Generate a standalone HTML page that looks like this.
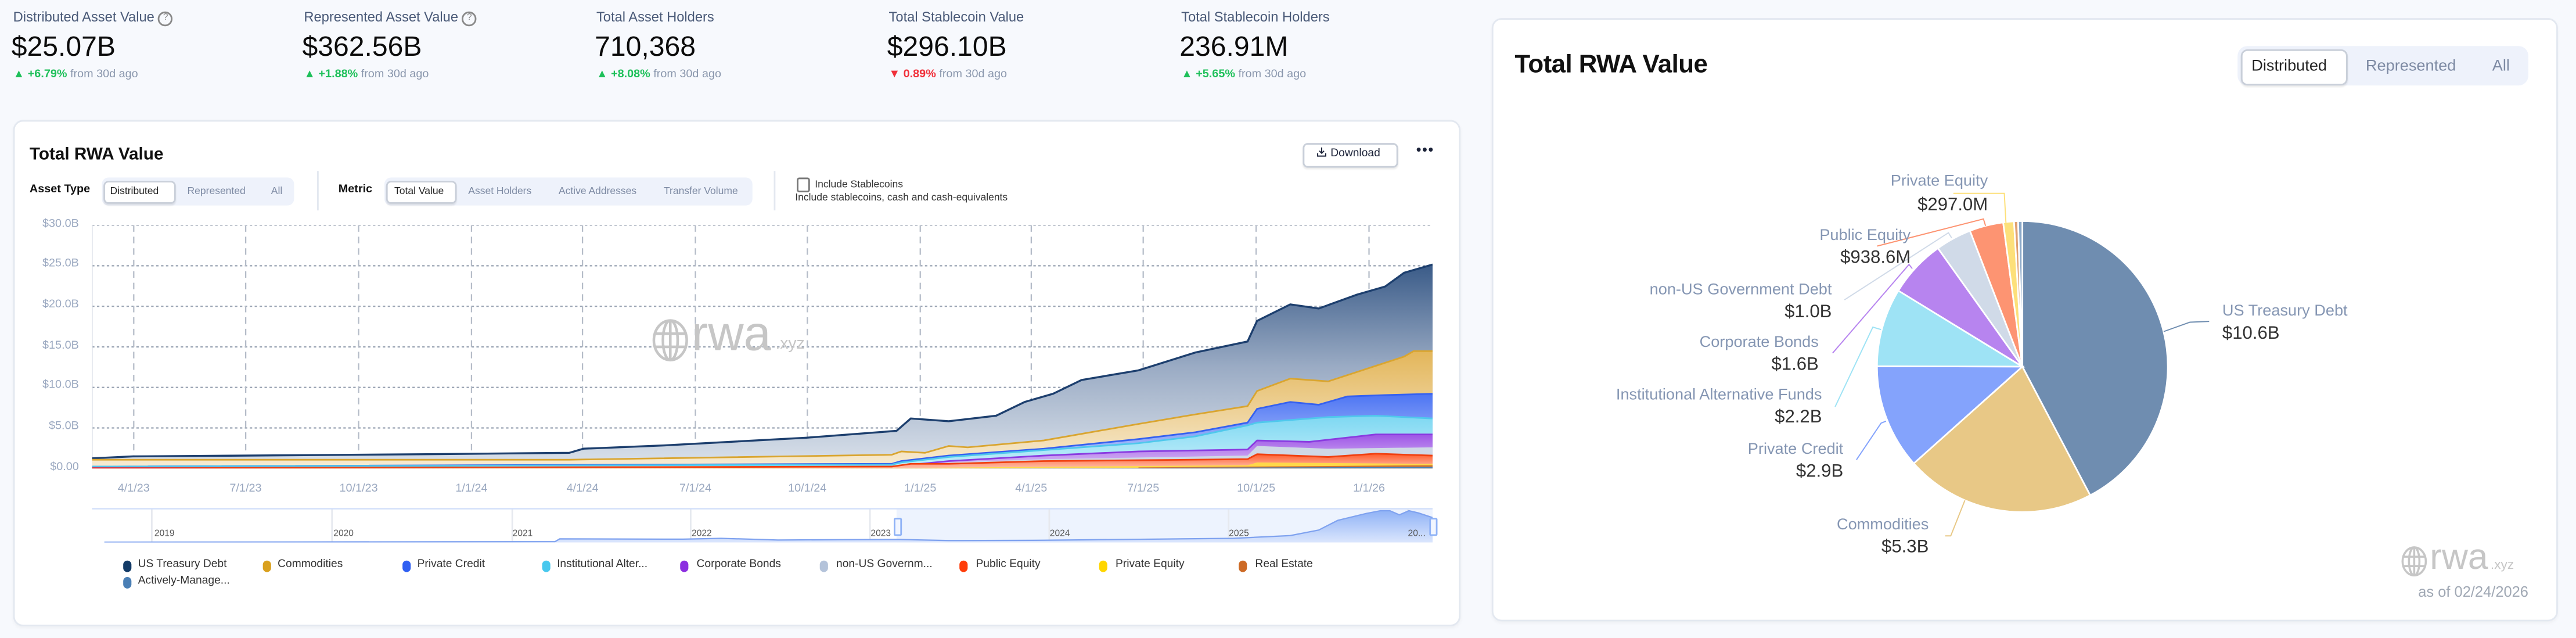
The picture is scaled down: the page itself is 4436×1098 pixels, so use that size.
<!DOCTYPE html>
<html><head><meta charset="utf-8">
<style>
html,body{margin:0;padding:0;background:#f7f9fd;}
body{width:4436px;height:1098px;overflow:hidden;font-family:"Liberation Sans",Arial,sans-serif;}
#root{position:absolute;left:0;top:0;width:1568px;height:388px;transform:scale(2.8291);transform-origin:0 0;}
.a{position:absolute;white-space:nowrap;}
.lbl{font-size:8.4px;color:#4a5a78;}
.val{font-size:17px;color:#0b0b0b;}
.chg{font-size:7px;color:#8a97ad;}
.up{color:#1ec05a;font-weight:bold;}
.dn{color:#f0303a;font-weight:bold;}
.card{position:absolute;background:#fff;border:1px solid #e3e8f0;border-radius:6px;box-shadow:0 1px 2px rgba(0,0,0,0.04);}
.seg{position:absolute;background:#eef2fb;border-radius:4px;}
.btn{position:absolute;background:#fff;border:1px solid #c9cfd9;border-radius:3px;box-shadow:0 1px 1px rgba(0,0,0,0.08);}
.s7{font-size:6.2px;color:#7d8aa3;}
.yl{font-size:7px;color:#9aa8c0;text-align:right;width:40px;}
.xl{font-size:7px;color:#9aa8c0;transform:translateX(-50%);}
.lg{font-size:6.8px;color:#333;}
.dot{position:absolute;width:5px;height:7px;border-radius:3px;}
.pl{font-size:9.6px;color:#8596b3;text-align:right;}
.pv{font-size:11px;color:#333;text-align:right;}
</style></head><body><div id="root">

<!-- stats -->
<div class="a lbl" style="left:8px;top:5px">Distributed Asset Value <span style="display:inline-block;width:7px;height:7px;border:0.8px solid #888;border-radius:50%;font-size:5.5px;line-height:7px;text-align:center;color:#888;vertical-align:1px">?</span></div>
<div class="a val" style="left:7px;top:19px">$25.07B</div>
<div class="a chg" style="left:8px;top:42px"><span class="up">▲ +6.79%</span> from 30d ago</div>

<div class="a lbl" style="left:185px;top:5px">Represented Asset Value <span style="display:inline-block;width:7px;height:7px;border:0.8px solid #888;border-radius:50%;font-size:5.5px;line-height:7px;text-align:center;color:#888;vertical-align:1px">?</span></div>
<div class="a val" style="left:184px;top:19px">$362.56B</div>
<div class="a chg" style="left:185px;top:42px"><span class="up">▲ +1.88%</span> from 30d ago</div>

<div class="a lbl" style="left:363px;top:5px">Total Asset Holders</div>
<div class="a val" style="left:362px;top:19px">710,368</div>
<div class="a chg" style="left:363px;top:42px"><span class="up">▲ +8.08%</span> from 30d ago</div>

<div class="a lbl" style="left:541px;top:5px">Total Stablecoin Value</div>
<div class="a val" style="left:540px;top:19px">$296.10B</div>
<div class="a chg" style="left:541px;top:42px"><span class="dn">▼ 0.89%</span> from 30d ago</div>

<div class="a lbl" style="left:719px;top:5px">Total Stablecoin Holders</div>
<div class="a val" style="left:718px;top:19px">236.91M</div>
<div class="a chg" style="left:719px;top:42px"><span class="up">▲ +5.65%</span> from 30d ago</div>

<!-- left card -->
<div class="card" style="left:8px;top:73px;width:879px;height:306px"></div>
<div class="a" style="left:18px;top:88px;font-size:10.5px;font-weight:bold;color:#111">Total RWA Value</div>
<div class="btn" style="left:793px;top:87px;width:56px;height:13px"></div>
<div class="a" style="left:801px;top:88.5px;font-size:6.8px;color:#1b2238">
<svg width="7" height="7" viewBox="0 0 10 10" style="vertical-align:-1px"><path d="M5 1v5M3 4l2 2 2-2M1.5 6v2.5h7V6" fill="none" stroke="#1b2238" stroke-width="1"/></svg> Download</div>
<div class="a" style="left:862px;top:86px;font-size:9px;color:#1b2238;letter-spacing:0.5px">•••</div>

<div class="a" style="left:18px;top:112px;font-size:7px;font-weight:bold;color:#111">Asset Type</div>
<div class="seg" style="left:61.7px;top:108px;width:117px;height:16.5px"></div>
<div class="btn" style="left:62.5px;top:109.5px;width:42px;height:12.5px"></div>
<div class="a s7" style="left:67px;top:112.5px;color:#222">Distributed</div>
<div class="a s7" style="left:114px;top:112.5px">Represented</div>
<div class="a s7" style="left:165px;top:112.5px">All</div>
<div class="a" style="left:192.5px;top:104px;width:0.8px;height:24px;background:#e3e8f0"></div>
<div class="a" style="left:206px;top:112px;font-size:7px;font-weight:bold;color:#111">Metric</div>
<div class="seg" style="left:233.7px;top:108px;width:224px;height:16.5px"></div>
<div class="btn" style="left:235px;top:109.5px;width:41px;height:12.5px"></div>
<div class="a s7" style="left:240px;top:112.5px;color:#222">Total Value</div>
<div class="a s7" style="left:285px;top:112.5px">Asset Holders</div>
<div class="a s7" style="left:340px;top:112.5px">Active Addresses</div>
<div class="a s7" style="left:404px;top:112.5px">Transfer Volume</div>
<div class="a" style="left:470.8px;top:104px;width:0.8px;height:24px;background:#e3e8f0"></div>
<div class="a" style="left:484.5px;top:108px;width:6px;height:6.5px;border:0.8px solid #777;border-radius:1.5px"></div>
<div class="a s7" style="left:496px;top:108.5px;color:#333">Include Stablecoins</div>
<div class="a s7" style="left:484px;top:116.5px;color:#333">Include stablecoins, cash and cash-equivalents</div>

<!-- y labels -->
<div class="a yl" style="left:8px;top:132.5px">$30.0B</div>
<div class="a yl" style="left:8px;top:157px">$25.0B</div>
<div class="a yl" style="left:8px;top:182px">$20.0B</div>
<div class="a yl" style="left:8px;top:206.5px">$15.0B</div>
<div class="a yl" style="left:8px;top:231px">$10.0B</div>
<div class="a yl" style="left:8px;top:256px">$5.0B</div>
<div class="a yl" style="left:8px;top:280.5px">$0.00</div>

<svg class="a" style="left:56px;top:137px" width="816" height="148" viewBox="97 77 1413 885" preserveAspectRatio="none">
<defs>
<linearGradient id="g1" gradientUnits="userSpaceOnUse" x1="0" y1="220" x2="0" y2="962"><stop offset="0" stop-color="#3a5b88"/><stop offset="0.5" stop-color="#9aabc4"/><stop offset="1" stop-color="#dce3ec"/></linearGradient>
<linearGradient id="g2" gradientUnits="userSpaceOnUse" x1="0" y1="535" x2="0" y2="962"><stop offset="0" stop-color="#e3b65a"/><stop offset="1" stop-color="#f8ecd4"/></linearGradient>
<linearGradient id="g3" gradientUnits="userSpaceOnUse" x1="0" y1="690" x2="0" y2="962"><stop offset="0" stop-color="#4c74f3"/><stop offset="1" stop-color="#c5d3fc"/></linearGradient>
<linearGradient id="g4" gradientUnits="userSpaceOnUse" x1="0" y1="775" x2="0" y2="962"><stop offset="0" stop-color="#7fd8f2"/><stop offset="1" stop-color="#c5effa"/></linearGradient>
<linearGradient id="g5" gradientUnits="userSpaceOnUse" x1="0" y1="838" x2="0" y2="962"><stop offset="0" stop-color="#9d55e6"/><stop offset="1" stop-color="#dcc2f6"/></linearGradient>
<linearGradient id="g6" gradientUnits="userSpaceOnUse" x1="0" y1="908" x2="0" y2="962"><stop offset="0" stop-color="#ff5a2a"/><stop offset="1" stop-color="#ffc0ac"/></linearGradient>
</defs>
<g stroke="#9aa4b3" stroke-width="0.8" vector-effect="non-scaling-stroke" fill="none">
<path d="M97 77H1510M97 224.5H1510M97 372H1510M97 519.5H1510M97 667H1510M97 814.5H1510M97 962H1510" stroke-dasharray="1.5 1.5" vector-effect="non-scaling-stroke"/>
<path d="M141 77V962M259 77V962M378 77V962M497 77V962M614 77V962M733 77V962M851 77V962M970 77V962M1087 77V962M1205 77V962M1324 77V962M1443 77V962" stroke="#b5bcc8" stroke-dasharray="4 3" vector-effect="non-scaling-stroke"/>
<path d="M97 77V962" stroke="#d6dbe3" vector-effect="non-scaling-stroke"/>
</g>
<polygon fill="url(#g1)" points="97,925 140,918 300,914 450,910 600,905 615,890 700,878 850,850 945,825 960,780 1000,790 1050,770 1080,720 1110,690 1140,640 1200,605 1260,540 1315,500 1325,425 1360,365 1390,380 1430,330 1460,300 1480,250 1510,220 1510,962 97,962"/>
<polyline fill="none" stroke="#1d3f6e" stroke-width="1.2" vector-effect="non-scaling-stroke" points="97,925 140,918 300,914 450,910 600,905 615,890 700,878 850,850 945,825 960,780 1000,790 1050,770 1080,720 1110,690 1140,640 1200,605 1260,540 1315,500 1325,425 1360,365 1390,380 1430,330 1460,300 1480,250 1510,220"/>
<polygon fill="url(#g2)" points="97,930 600,930 940,912 950,900 975,905 1000,880 1020,885 1100,860 1200,800 1260,765 1315,735 1325,680 1360,635 1400,645 1440,600 1480,555 1490,535 1510,535 1510,962 97,962"/>
<polyline fill="none" stroke="#d9a530" stroke-width="1" vector-effect="non-scaling-stroke" points="97,930 600,930 940,912 950,900 975,905 1000,880 1020,885 1100,860 1200,800 1260,765 1315,735 1325,680 1360,635 1400,645 1440,600 1480,555 1490,535 1510,535"/>
<polygon fill="url(#g3)" points="97,955 940,945 950,935 1000,915 1100,890 1200,855 1260,830 1315,795 1325,745 1360,720 1390,730 1420,700 1460,695 1510,690 1510,962 97,962"/>
<polyline fill="none" stroke="#3561f0" stroke-width="1" vector-effect="non-scaling-stroke" points="97,955 940,945 950,935 1000,915 1100,890 1200,855 1260,830 1315,795 1325,745 1360,720 1390,730 1420,700 1460,695 1510,690"/>
<polygon fill="url(#g4)" points="97,955 940,948 950,940 1000,920 1100,895 1200,870 1260,845 1315,805 1325,795 1400,775 1450,770 1510,780 1510,962 97,962"/>
<polyline fill="none" stroke="#4fc8ec" stroke-width="1" vector-effect="non-scaling-stroke" points="97,955 940,948 950,940 1000,920 1100,895 1200,870 1260,845 1315,805 1325,795 1400,775 1450,770 1510,780"/>
<polygon fill="url(#g5)" points="97,960 700,958 940,955 1000,935 1100,915 1200,900 1315,893 1325,860 1380,865 1450,838 1510,838 1510,962 97,962"/>
<polyline fill="none" stroke="#8a3be0" stroke-width="1" vector-effect="non-scaling-stroke" points="97,960 700,958 940,955 1000,935 1100,915 1200,900 1315,893 1325,860 1380,865 1450,838 1510,838"/>
<polygon fill="#cfd8e6" points="97,960 940,956 1000,940 1100,928 1200,922 1315,915 1325,880 1400,890 1510,885 1510,962 97,962"/>
<polygon fill="url(#g6)" points="97,961 940,955 960,945 1000,945 1100,935 1200,932 1315,928 1325,910 1400,920 1450,908 1510,915 1510,962 97,962"/>
<polyline fill="none" stroke="#f04010" stroke-width="1" vector-effect="non-scaling-stroke" points="97,961 940,955 960,945 1000,945 1100,935 1200,932 1315,928 1325,910 1400,920 1450,908 1510,915"/>
<polygon fill="#ffd84a" points="97,962 940,960 1315,950 1325,940 1510,945 1510,962"/>
<polygon fill="#d2742e" points="1200,962 1200,958 1510,950 1510,962"/>
<polygon fill="#4a7fb5" points="1000,962 1510,956 1510,962"/>
</svg>
<!-- watermark -->
<div class="a" style="left:396px;top:193px;color:#c6c6c6">
<svg width="24" height="26" viewBox="0 0 24 26" style="position:absolute;left:0;top:1px"><g fill="none" stroke="#c6c6c6" stroke-width="1.6"><ellipse cx="12" cy="13" rx="10" ry="12"/><ellipse cx="12" cy="13" rx="4.5" ry="12"/><path d="M2 9H22M2 17H22M12 1V25"/></g></svg>
<span style="position:absolute;left:25px;top:-6px;font-size:30px;">rwa</span><span style="position:absolute;left:76px;top:11px;font-size:10px">.xyz</span></div>

<!-- x labels -->
<div class="a xl" style="left:81.4px;top:294px">4/1/23</div>
<div class="a xl" style="left:149.5px;top:294px">7/1/23</div>
<div class="a xl" style="left:218.3px;top:294px">10/1/23</div>
<div class="a xl" style="left:287px;top:294px">1/1/24</div>
<div class="a xl" style="left:354.6px;top:294px">4/1/24</div>
<div class="a xl" style="left:423.3px;top:294px">7/1/24</div>
<div class="a xl" style="left:491.4px;top:294px">10/1/24</div>
<div class="a xl" style="left:560.2px;top:294px">1/1/25</div>
<div class="a xl" style="left:627.7px;top:294px">4/1/25</div>
<div class="a xl" style="left:695.9px;top:294px">7/1/25</div>
<div class="a xl" style="left:764.6px;top:294px">10/1/25</div>
<div class="a xl" style="left:833.3px;top:294px">1/1/26</div>

<!-- navigator -->
<svg class="a" style="left:56px;top:309px" width="816" height="21" viewBox="97 1100 1413 125" preserveAspectRatio="none">
<defs><linearGradient id="gn" x1="0" y1="0" x2="0" y2="1"><stop offset="0" stop-color="#8fb2f6"/><stop offset="1" stop-color="#dbe6fd"/></linearGradient></defs>
<rect x="945" y="1100" width="565" height="125" fill="#edf3fe"/>
<path d="M160 1100V1225M350 1100V1225M540 1100V1225M728 1100V1225M917 1100V1225M1106 1100V1225M1295 1100V1225M1484 1100V1225" stroke="#e6e9ef" stroke-width="1" vector-effect="non-scaling-stroke"/>
<path d="M110 1224L585 1222L590 1212L720 1213L760 1210L820 1216L945 1214L1000 1218L1100 1217L1300 1210L1360 1200L1390 1180L1410 1145L1440 1120L1455 1110L1465 1110L1475 1125L1485 1110L1495 1118L1510 1135L1510 1225L110 1225Z" fill="url(#gn)"/>
<path d="M110 1224L585 1222L590 1212L720 1213L760 1210L820 1216L945 1214L1000 1218L1100 1217L1300 1210L1360 1200L1390 1180L1410 1145L1440 1120L1455 1110L1465 1110L1475 1125L1485 1110L1495 1118L1510 1135" fill="none" stroke="#7fa2ef" stroke-width="0.8" vector-effect="non-scaling-stroke"/>
<path d="M97 1101H1510" stroke="#d3e0fa" stroke-width="1.5" vector-effect="non-scaling-stroke"/>
</svg>
<div class="a" style="left:543.5px;top:315px;width:3px;height:9px;background:#f2f6ff;border:0.7px solid #8fb2f6;border-radius:1px"></div>
<div class="a" style="left:869.5px;top:315px;width:3px;height:9px;background:#f2f6ff;border:0.7px solid #8fb2f6;border-radius:1px"></div>
<div class="a" style="font-size:5.5px;color:#555;left:94px;top:321.5px">2019</div>
<div class="a" style="font-size:5.5px;color:#555;left:203px;top:321.5px">2020</div>
<div class="a" style="font-size:5.5px;color:#555;left:312px;top:321.5px">2021</div>
<div class="a" style="font-size:5.5px;color:#555;left:421px;top:321.5px">2022</div>
<div class="a" style="font-size:5.5px;color:#555;left:530px;top:321.5px">2023</div>
<div class="a" style="font-size:5.5px;color:#555;left:639px;top:321.5px">2024</div>
<div class="a" style="font-size:5.5px;color:#555;left:748px;top:321.5px">2025</div>
<div class="a" style="font-size:5.5px;color:#555;left:857px;top:321.5px">20...</div>

<!-- legend -->
<div class="dot" style="left:74.5px;top:341px;background:#123a66"></div><div class="a lg" style="left:84px;top:340px">US Treasury Debt</div>
<div class="dot" style="left:159.5px;top:341px;background:#d9a01e"></div><div class="a lg" style="left:169px;top:340px">Commodities</div>
<div class="dot" style="left:244.5px;top:341px;background:#2f5ff2"></div><div class="a lg" style="left:254px;top:340px">Private Credit</div>
<div class="dot" style="left:329.5px;top:341px;background:#48c8ee"></div><div class="a lg" style="left:339px;top:340px">Institutional Alter...</div>
<div class="dot" style="left:414px;top:341px;background:#8c2fe0"></div><div class="a lg" style="left:424px;top:340px">Corporate Bonds</div>
<div class="dot" style="left:499px;top:341px;background:#b4c3da"></div><div class="a lg" style="left:509px;top:340px">non-US Governm...</div>
<div class="dot" style="left:584px;top:341px;background:#ff3d0a"></div><div class="a lg" style="left:594px;top:340px">Public Equity</div>
<div class="dot" style="left:669px;top:341px;background:#ffd600"></div><div class="a lg" style="left:679px;top:340px">Private Equity</div>
<div class="dot" style="left:754px;top:341px;background:#cd6a25"></div><div class="a lg" style="left:764px;top:340px">Real Estate</div>
<div class="dot" style="left:74.5px;top:351px;background:#4a7fb5"></div><div class="a lg" style="left:84px;top:350px">Actively-Manage...</div>

<!-- right card -->
<div class="card" style="left:908px;top:11px;width:647px;height:365px"></div>
<div class="a" style="left:922px;top:31px;font-size:15.5px;font-weight:bold;color:#111;letter-spacing:-0.2px">Total RWA Value</div>
<div class="seg" style="left:1361.6px;top:27.7px;width:177.5px;height:24.8px;border-radius:6px"></div>
<div class="btn" style="left:1364px;top:30px;width:63px;height:19.5px;border-radius:4px"></div>
<div class="a" style="left:1370.5px;top:34.5px;font-size:9.6px;color:#222">Distributed</div>
<div class="a" style="left:1440px;top:34.5px;font-size:9.6px;color:#7d8aa3">Represented</div>
<div class="a" style="left:1517px;top:34.5px;font-size:9.6px;color:#7d8aa3">All</div>

<svg class="a" style="left:908px;top:11px" width="647" height="365" viewBox="908 11 647 365">
<g stroke="#fff" stroke-width="1">
<path d="M1231 223L1231 134.5A88.5 88.5 0 0 1 1272.3 301.3Z" fill="#6f8db0"/>
<path d="M1231 223L1272.3 301.3A88.5 88.5 0 0 1 1164.9 281.9Z" fill="#e8c886"/>
<path d="M1231 223L1164.9 281.9A88.5 88.5 0 0 1 1142.5 222.8Z" fill="#84a3fc"/>
<path d="M1231 223L1142.5 222.8A88.5 88.5 0 0 1 1155.5 176.8Z" fill="#9ee3f5"/>
<path d="M1231 223L1155.5 176.8A88.5 88.5 0 0 1 1179.6 151Z" fill="#b784ef"/>
<path d="M1231 223L1179.6 151A88.5 88.5 0 0 1 1199.1 140.4Z" fill="#d0dae8"/>
<path d="M1231 223L1199.1 140.4A88.5 88.5 0 0 1 1219.3 135.3Z" fill="#fd9472"/>
<path d="M1231 223L1219.3 135.3A88.5 88.5 0 0 1 1225.9 134.6Z" fill="#fde07a"/>
<path d="M1231 223L1225.9 134.6A88.5 88.5 0 0 1 1228.4 134.5Z" fill="#e0a070"/>
<path d="M1231 223L1228.4 134.5A88.5 88.5 0 0 1 1231 134.5Z" fill="#8aa8c8"/>
</g>
<g fill="none" stroke-width="0.7">
<path d="M1317 201.7L1333 196L1344.7 195.5" stroke="#6f8db0"/>
<path d="M1189 117.6H1220L1221 135.6" stroke="#fde07a"/>
<path d="M1142.6 149.7L1207.3 133.2L1208.6 137.4" stroke="#fd9472"/>
<path d="M1122.7 182.4L1186 141.6L1188 144.8" stroke="#d0dae8"/>
<path d="M1115.5 214.8L1162 160.9L1164 163.4" stroke="#b784ef"/>
<path d="M1117 247.5L1140 199L1145 200.5" stroke="#9ee3f5"/>
<path d="M1130 279.7L1145 257.4L1148 256.2" stroke="#84a3fc"/>
<path d="M1184 326H1187.4L1196 304.4" stroke="#e8c886"/>
</g>
</svg>
<div class="a pl" style="right:358px;top:105px">Private Equity</div>
<div class="a pv" style="right:358px;top:118.5px">$297.0M</div>
<div class="a pl" style="right:405px;top:138px">Public Equity</div>
<div class="a pv" style="right:405px;top:151px">$938.6M</div>
<div class="a pl" style="right:453px;top:170.5px">non-US Government Debt</div>
<div class="a pv" style="right:453px;top:184px">$1.0B</div>
<div class="a pl" style="right:461px;top:203px">Corporate Bonds</div>
<div class="a pv" style="right:461px;top:216px">$1.6B</div>
<div class="a pl" style="right:459px;top:235px">Institutional Alternative Funds</div>
<div class="a pv" style="right:459px;top:248px">$2.2B</div>
<div class="a pl" style="right:446px;top:268px">Private Credit</div>
<div class="a pv" style="right:446px;top:281px">$2.9B</div>
<div class="a pl" style="right:394px;top:314px">Commodities</div>
<div class="a pv" style="right:394px;top:327px">$5.3B</div>
<div class="a pl" style="left:1352.7px;top:184px;text-align:left">US Treasury Debt</div>
<div class="a pv" style="left:1352.7px;top:197px;text-align:left">$10.6B</div>

<div class="a" style="left:1461px;top:331px;color:#c6c6c6">
<svg width="17" height="19" viewBox="0 0 24 26" style="position:absolute;left:0;top:1px"><g fill="none" stroke="#c6c6c6" stroke-width="1.8"><ellipse cx="12" cy="13" rx="10" ry="12"/><ellipse cx="12" cy="13" rx="4.5" ry="12"/><path d="M2 9H22M2 17H22M12 1V25"/></g></svg>
<span style="position:absolute;left:18px;top:-5px;font-size:22px;">rwa</span><span style="position:absolute;left:55px;top:8px;font-size:8px">.xyz</span></div>
<div class="a" style="right:29px;top:355px;font-size:9px;color:#a0a8b4">as of 02/24/2026</div>

</div></body></html>
